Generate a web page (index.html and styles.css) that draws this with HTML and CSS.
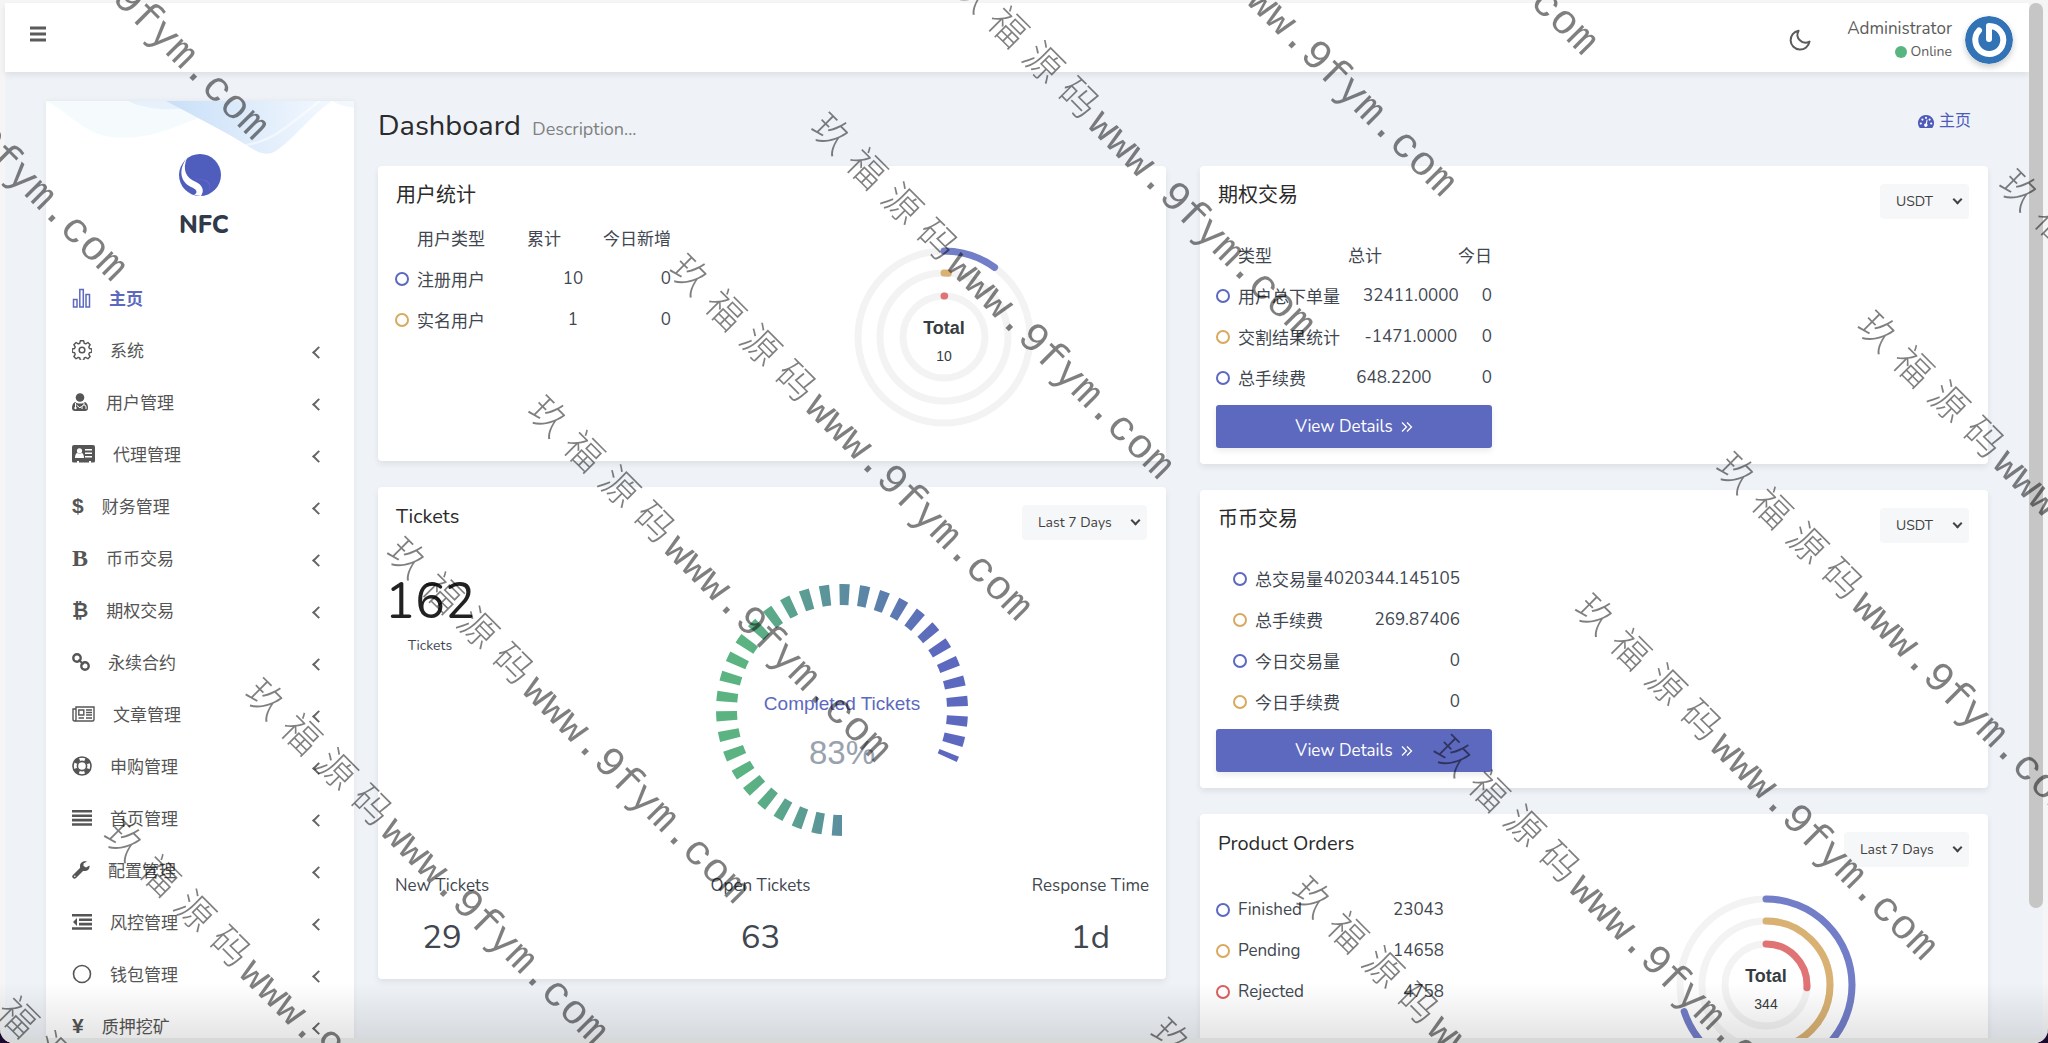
FILE: index.html
```html
<!DOCTYPE html>
<html lang="zh-CN">
<head>
    <meta charset="UTF-8">
    <meta name="viewport" content="width=device-width, initial-scale=1.0">
    <title>NFC | Dashboard</title>
    <link rel="stylesheet" href="styles.css">
</head>
<body>
    <div class="window">
        <div class="page">
            <header class="navbar">
                <button class="menu-toggle" type="button" aria-label="Toggle menu">
                    <svg width="18" height="16" viewBox="0 0 18 16"><path d="M1 2h16M1 8h16M1 14h16" stroke="#5b5b5b" stroke-width="3"/></svg>
                </button>
                <div class="navbar-right">
                    <button class="theme-toggle" type="button" aria-label="Dark mode">
                        <svg width="24" height="24" viewBox="0 0 24 24" fill="none" stroke="#5b5b5b" stroke-width="2" stroke-linejoin="round"><path d="M21.5 13.6A9.5 9.5 0 1 1 10.6 2.7 8 8 0 0 0 21.5 13.6z"/></svg>
                    </button>
                    <div class="user">
                        <span class="user-name">Administrator</span>
                        <span class="user-status"><i class="status-dot"></i>Online</span>
                    </div>
                    <svg class="avatar" width="48" height="48" viewBox="0 0 48 48">
                        <circle cx="24" cy="24" r="24" fill="#3173b5"/>
                        <path d="M24 11v12" fill="none" stroke="#fff" stroke-width="6" stroke-linecap="round"/>
                        <path d="M14 14.5A14 14 0 1 0 24 10" fill="none" stroke="#fff" stroke-width="6" stroke-linecap="round"/>
                    </svg>
                </div>
            </header>

            <div class="layout">
                <aside class="sidebar">
                    <svg class="waves" viewBox="0 0 308 75" preserveAspectRatio="none">
                        <defs>
                            <linearGradient id="waveBlue" x1="0" y1="0" x2="1" y2="0">
                                <stop offset="0" stop-color="#c9dff8"/>
                                <stop offset="1" stop-color="#f3f8fe"/>
                            </linearGradient>
                        </defs>
                        <path d="M0 0C30 22 40 50 76 50S128 34 160 20C190 8 200 0 200 0z" fill="#f5fbfc"/>
                        <path d="M82 0C100 12 125 14 150 8L180 0z" fill="#e6f1fc"/>
                        <path d="M120 0C150 22 180 42 205 64 216 74 224 74 232 66 252 46 266 18 286 0z" fill="url(#waveBlue)"/>
                        <path d="M200 60C230 54 250 24 274 0" fill="none" stroke="#fff" stroke-width="3" opacity=".5"/>
                        <path d="M286 0Q296 8 308 9V0z" fill="#f3f8fc"/>
                    </svg>
                    <a class="brand" href="#">
                        <svg width="42" height="42" viewBox="0 0 42 42">
                            <circle cx="21" cy="21" r="21" fill="#4f5dbd"/>
                            <path d="M6 22C12 29 28 21 31 31c1 4-2 8-7 10 8-3 10-12 0-15-9-1-16 0-18-4z" fill="#7a66e0"/>
                            <path d="M8 4C0 14 0 27 12 33c5 2 8 5 3 8l7 1c4-6 1-11-5-14C7 24 3 16 8 4z" fill="#fff"/>
                        </svg>
                        <span>NFC</span>
                    </a>
                    <nav class="menu">
                        <a class="active" href="#">
                            <svg width="19" height="20" viewBox="0 0 19 20" fill="none" stroke="#5c69be" stroke-width="1.5"><path d="M1.5 11.5h3.5V19H1.5zM7.8 1.5h3.5V19H7.8zM14 6.5h3.5V19H14z"/></svg>
                            <span>主页</span>
                        </a>
                        <a href="#">
                            <svg width="20" height="20" viewBox="0 0 24 24" fill="none" stroke="#555" stroke-width="1.8" stroke-linejoin="round"><path d="M10 1.5h4l.8 3.2 1.9.8 2.8-1.7 2.8 2.8-1.7 2.8.8 1.9 3 .7v4l-3 .8-.8 1.9 1.7 2.8-2.8 2.8-2.8-1.7-1.9.8-.8 3.1h-4l-.8-3.1-1.9-.8-2.8 1.7-2.8-2.8 1.7-2.8-.8-1.9-3-.8v-4l3-.7.8-1.9-1.7-2.8 2.8-2.8 2.8 1.7 1.9-.8z" transform="translate(.6 -.6) scale(.95)"/><circle cx="12" cy="12" r="3.4"/></svg>
                            <span>系统</span>
                            <i class="arrow"></i>
                        </a>
                        <a href="#">
                            <svg width="16" height="18" viewBox="0 0 16 18"><circle cx="8" cy="4.5" r="4.3" fill="#555"/><path d="M3 9C1 10 0 12 0 15c0 2 1 3 3 3h10c2 0 3-1 3-3 0-3-1-5-3-6-3 2-7 2-10 0z" fill="#555"/><path d="M3.5 10v4M12 10v2m-2 4v-2q0-2 2-2t2 2v2M4.5 12l3.5 3 1.5-2" fill="none" stroke="#fff" stroke-width="1"/><circle cx="3.5" cy="15" r="1.2" fill="#fff"/></svg>
                            <span>用户管理</span>
                            <i class="arrow"></i>
                        </a>
                        <a href="#">
                            <svg width="23" height="18" viewBox="0 0 23 18"><path d="M2 0h19q2 0 2 2v14q0 1.5-1.5 1.5H19V16h-2v1.5H7V16H5v1.5H1.5Q0 17.5 0 16V2q0-2 2-2z" fill="#555"/><circle cx="7.5" cy="5.8" r="2.6" fill="#fff"/><path d="M3 13c0-3 1-5 2.5-5q2 1.5 4 0C11 8 12 10 12 13zM13 4h7v1.5h-7zM13 7.5h7V9h-7zM13 11h7v1.5h-7z" fill="#fff"/></svg>
                            <span>代理管理</span>
                            <i class="arrow"></i>
                        </a>
                        <a href="#">
                            <b class="glyph">$</b>
                            <span>财务管理</span>
                            <i class="arrow"></i>
                        </a>
                        <a href="#">
                            <b class="glyph serif">B</b>
                            <span>币币交易</span>
                            <i class="arrow"></i>
                        </a>
                        <a href="#">
                            <b class="glyph coin">₿</b>
                            <span>期权交易</span>
                            <i class="arrow"></i>
                        </a>
                        <a href="#">
                            <svg width="18" height="18" viewBox="0 0 18 18" fill="none" stroke="#555" stroke-width="2.4"><circle cx="5" cy="5" r="3.7"/><circle cx="13" cy="13" r="3.7"/><path d="M6.5 6.5l5 5" stroke-width="2"/></svg>
                            <span>永续合约</span>
                            <i class="arrow"></i>
                        </a>
                        <a href="#">
                            <svg width="23" height="16" viewBox="0 0 23 16" fill="none" stroke="#555" stroke-width="1.4"><path d="M4 1h18v12.5q0 1.5-1.5 1.5h-18Q1 15 1 13.500V3h3zM4 3v10.5Q4 15 2.500 15M6.800 4h5v5h-5zM14 4h6M14 6.500h6M14 9h6M6.500 12H12M14 12h6"/></svg>
                            <span>文章管理</span>
                            <i class="arrow"></i>
                        </a>
                        <a href="#">
                            <svg width="20" height="20" viewBox="0 0 20 20" fill="none" stroke="#555"><circle cx="10" cy="10" r="9" stroke-width="1.6"/><circle cx="10" cy="10" r="4.6" stroke-width="1.6"/><circle cx="10" cy="10" r="7" stroke-width="4" stroke-dasharray="5.5 5.5" stroke-dashoffset="-2.75"/></svg>
                            <span>申购管理</span>
                            <i class="arrow"></i>
                        </a>
                        <a href="#">
                            <svg width="20" height="16" viewBox="0 0 20 16"><path d="M0 1.3h20M0 5.700h20M0 10.100h20M0 14.500h20" stroke="#555" stroke-width="2.6"/></svg>
                            <span>首页管理</span>
                            <i class="arrow"></i>
                        </a>
                        <a href="#">
                            <svg width="18" height="18" viewBox="0 0 18 18"><path d="M2.5 15.5l8-8" stroke="#555" stroke-width="4.4" stroke-linecap="round"/><path d="M17.5 4.5l-3.5 2-2.5-1.5V2.5L15 .5C12-.6 8 1 8 5s3 5.500 5.500 5c3-.6 4.500-3 4-5.500z" fill="#555"/><circle cx="2.8" cy="15.2" r=".8" fill="#fff"/></svg>
                            <span>配置管理</span>
                            <i class="arrow"></i>
                        </a>
                        <a href="#">
                            <svg width="20" height="16" viewBox="0 0 20 16"><path d="M0 1.3h20M7 5.700h13M7 10.100h13M0 14.500h20" stroke="#555" stroke-width="2.6"/><path d="M5 4v8L1 8z" fill="#555"/></svg>
                            <span>风控管理</span>
                            <i class="arrow"></i>
                        </a>
                        <a href="#">
                            <svg width="20" height="20" viewBox="0 0 20 20"><circle cx="10" cy="10" r="8.5" fill="none" stroke="#555" stroke-width="1.6"/></svg>
                            <span>钱包管理</span>
                            <i class="arrow"></i>
                        </a>
                        <a href="#">
                            <b class="glyph">¥</b>
                            <span>质押挖矿</span>
                            <i class="arrow"></i>
                        </a>
                    </nav>
                </aside>

                <main class="content">
                    <div class="content-header">
                        <h1>Dashboard <small>Description...</small></h1>
                        <a class="breadcrumb" href="#">
                            <svg width="16" height="13" viewBox="0 0 16 13"><path d="M8 0a8 8 0 0 0-6.8 12.2q.3.8 1 .8h11.600q.7 0 1-.8A8 8 0 0 0 8 0z" fill="#4e5bb8"/><g fill="#fff"><circle cx="2.8" cy="8.5" r="1.1"/><circle cx="4.4" cy="4.6" r="1.1"/><circle cx="8" cy="2.8" r="1.1"/><circle cx="11.6" cy="4.6" r="1.1"/><circle cx="13.2" cy="8.5" r="1.1"/><path d="M8.700 4.500l.9.300-.6 4a1.700 1.700 0 1 1-1.300-.4z"/></g></svg>
                            主页
                        </a>
                    </div>

                    <div class="columns">
                        <div class="column">
                            <section class="card user-card">
                                <div class="card-head"><h2>用户统计</h2></div>
                                <div class="card-split">
                                    <table class="stats">
                                        <thead>
                                            <tr><th>用户类型</th><th>累计</th><th>今日新增</th></tr>
                                        </thead>
                                        <tbody>
                                            <tr><td class="dot blue">注册用户</td><td>10</td><td>0</td></tr>
                                            <tr><td class="dot gold">实名用户</td><td>1</td><td>0</td></tr>
                                        </tbody>
                                    </table>
                                    <svg class="rings" width="180" height="180" viewBox="-90 -90 180 180">
                                        <g class="track"><circle r="86"/><circle r="64"/><circle r="41"/></g>
                                        <g class="arc" transform="rotate(-90)">
                                            <circle class="c-blue" r="86" pathLength="360" stroke-dasharray="36 324"/>
                                            <circle class="c-gold" r="64" pathLength="360" stroke-dasharray="4 356"/>
                                            <circle class="c-red" r="41" pathLength="360" stroke-dasharray="1 359"/>
                                        </g>
                                        <text class="rings-label" y="-3">Total</text>
                                        <text class="rings-value" y="24">10</text>
                                    </svg>
                                </div>
                            </section>

                            <section class="card">
                                <div class="card-head">
                                    <h2>Tickets</h2>
                                    <div class="select"><select aria-label="Tickets period"><option>Last 7 Days</option></select></div>
                                </div>
                                <div class="tickets">
                                    <div class="tickets-total">
                                        <strong>162</strong>
                                        <span>Tickets</span>
                                    </div>
                                    <div class="gauge">
                                        <svg width="252" height="252" viewBox="-126 -126 252 252">
                                            <defs>
                                                <linearGradient id="gaugeFill" gradientUnits="userSpaceOnUse" x1="-95" y1="0" x2="95" y2="0">
                                                    <stop offset="0" stop-color="#5bb381"/>
                                                    <stop offset="1" stop-color="#5c69be"/>
                                                </linearGradient>
                                            </defs>
                                            <path d="M0 115.5A115.5 115.5 0 1 1 105.2 47.7" fill="none" stroke="url(#gaugeFill)" stroke-width="21" stroke-dasharray="9.48 9.48"/>
                                            <text class="gauge-label">Completed Tickets</text>
                                            <text class="gauge-value" y="54">83%</text>
                                        </svg>
                                    </div>
                                </div>
                                <dl class="ticket-stats">
                                    <div><dt>New Tickets</dt><dd>29</dd></div>
                                    <div><dt>Open Tickets</dt><dd>63</dd></div>
                                    <div><dt>Response Time</dt><dd>1d</dd></div>
                                </dl>
                            </section>
                        </div>

                        <div class="column">
                            <section class="card">
                                <div class="card-head">
                                    <h2>期权交易</h2>
                                    <div class="select"><select aria-label="期权交易"><option>USDT</option></select></div>
                                </div>
                                <div class="card-body">
                                    <table class="stats">
                                        <thead>
                                            <tr><th>类型</th><th>总计</th><th>今日</th></tr>
                                        </thead>
                                        <tbody>
                                            <tr><td class="dot blue">用户总下单量</td><td>32411.0000</td><td>0</td></tr>
                                            <tr><td class="dot gold">交割结果统计</td><td>-1471.0000</td><td>0</td></tr>
                                            <tr><td class="dot blue">总手续费</td><td>648.2200</td><td>0</td></tr>
                                        </tbody>
                                    </table>
                                    <button class="details" type="button">View Details
                                        <svg width="12" height="12" viewBox="0 0 12 12" fill="none" stroke="#fff" stroke-width="1.3"><path d="M1 1.5L5.5 6 1 10.5M6 1.5L10.5 6 6 10.5"/></svg>
                                    </button>
                                </div>
                            </section>

                            <section class="card">
                                <div class="card-head">
                                    <h2>币币交易</h2>
                                    <div class="select"><select aria-label="币币交易"><option>USDT</option></select></div>
                                </div>
                                <div class="card-body">
                                    <table class="stats inset">
                                        <tbody>
                                            <tr><td class="dot blue">总交易量</td><td>4020344.145105</td></tr>
                                            <tr><td class="dot gold">总手续费</td><td>269.87406</td></tr>
                                            <tr><td class="dot blue">今日交易量</td><td>0</td></tr>
                                            <tr><td class="dot gold">今日手续费</td><td>0</td></tr>
                                        </tbody>
                                    </table>
                                    <button class="details" type="button">View Details
                                        <svg width="12" height="12" viewBox="0 0 12 12" fill="none" stroke="#fff" stroke-width="1.3"><path d="M1 1.5L5.5 6 1 10.5M6 1.5L10.5 6 6 10.5"/></svg>
                                    </button>
                                </div>
                            </section>

                            <section class="card">
                                <div class="card-head">
                                    <h2>Product Orders</h2>
                                    <div class="select"><select aria-label="Orders period"><option>Last 7 Days</option></select></div>
                                </div>
                                <div class="card-split orders">
                                    <table class="stats">
                                        <tbody>
                                            <tr><td class="dot blue">Finished</td><td>23043</td></tr>
                                            <tr><td class="dot gold">Pending</td><td>14658</td></tr>
                                            <tr><td class="dot red">Rejected</td><td>4758</td></tr>
                                        </tbody>
                                    </table>
                                    <svg class="rings" width="180" height="180" viewBox="-90 -90 180 180">
                                        <g class="track"><circle r="86"/><circle r="64"/><circle r="41"/></g>
                                        <g class="arc" transform="rotate(-90)">
                                            <circle class="c-blue" r="86" pathLength="360" stroke-dasharray="252 108"/>
                                            <circle class="c-gold" r="64" pathLength="360" stroke-dasharray="180 180"/>
                                            <circle class="c-red" r="41" pathLength="360" stroke-dasharray="94 266"/>
                                        </g>
                                        <text class="rings-label" y="-3">Total</text>
                                        <text class="rings-value" y="24">344</text>
                                    </svg>
                                </div>
                            </section>
                        </div>
                    </div>
                </main>
            </div>
        </div>
        <div class="scrollbar"><div class="scrollbar-thumb"></div></div>
    </div>
    <div class="window-shade"></div>
    <div class="watermark"><div class="watermark-grid" id="watermarkGrid"></div></div>

    <script>
        // Fill the diagonal watermark grid, leaving cells outside the window empty
        const grid = document.getElementById('watermarkGrid');
        for (let i = 0; i < 36; i++) {
            const mark = document.createElement('div');
            mark.className = 'mark';
            mark.innerHTML = '<i>玖</i><i>福</i><i>源</i><i>码</i><span>www.9fym.com</span>';
            grid.appendChild(mark);

            mark.querySelectorAll('i, span').forEach(part => {
                const box = part.getBoundingClientRect();
                if (box.right < 4 || box.bottom < 4 || box.left > innerWidth - 4 || box.top > innerHeight - 4) {
                    part.textContent = '';
                }
            });
        }
    </script>
</body>
</html>
```
FILE: styles.css
```css
:root {
    --primary: #5c69be;
    --gold: #d9a95f;
    --red: #dc5f5f;
    --green: #59b580;
    --bg: #eff3f8;
    --text: #414750;
    --menu: #555;
    --shadow: 0 3px 6px rgba(0, 0, 0, 0.08);
}

*,
*::before,
*::after {
    margin: 0;
    padding: 0;
    box-sizing: border-box;
}

body {
    height: 100vh;
    overflow: hidden;
    background: #1c0a2e;
    color: var(--text);
    font-family: Nunito, Lato, "Noto Sans CJK SC", sans-serif;
    font-size: 17px;
}

a {
    color: inherit;
    text-decoration: none;
}

button {
    border: none;
    background: none;
    font: inherit;
    cursor: pointer;
}

.window {
    display: flex;
    height: 100vh;
    padding: 3px 5px 0;
    background: #f5f5f6;
    border-radius: 0 0 14px 14px;
    overflow: hidden;
}

.page {
    flex: 1;
    background: var(--bg);
}

.scrollbar {
    width: 14px;
    background: var(--bg);
}

.scrollbar-thumb {
    height: 87%;
    background: #c6c6c6;
    border-radius: 7px;
}

/* Navbar */
.navbar {
    display: flex;
    justify-content: space-between;
    align-items: center;
    height: 69px;
    padding: 4px 16px 0 24px;
    background: #fff;
    box-shadow: var(--shadow);
}

.menu-toggle {
    line-height: 0;
    padding-bottom: 12px;
}

.navbar-right {
    display: flex;
    align-items: center;
}

.theme-toggle {
    line-height: 0;
    margin-right: 35px;
}

.user {
    display: flex;
    flex-direction: column;
    align-items: flex-end;
    margin-right: 13px;
    color: #5b5b5b;
    line-height: 24px;
}

.user-status {
    display: flex;
    align-items: center;
    gap: 4px;
    font-size: 14px;
    line-height: 22px;
}

.status-dot {
    width: 12px;
    height: 12px;
    border-radius: 50%;
    background: var(--green);
}

.avatar {
    border-radius: 50%;
    box-shadow: 0 3px 6px rgba(0, 0, 0, 0.2);
}

.layout {
    display: flex;
    gap: 24px;
    padding: 0 41px;
}

/* Sidebar */
.sidebar {
    position: relative;
    flex: 0 0 308px;
    margin-top: 29px;
    padding-top: 53px;
    background: #fff;
    box-shadow: 0 0 6px rgba(0, 0, 0, 0.06);
}

.waves {
    position: absolute;
    top: 0;
    left: 0;
    width: 100%;
    height: 55px;
}

.brand {
    position: relative;
    display: flex;
    flex-direction: column;
    align-items: center;
    gap: 14px;
    margin-bottom: 32px;
    color: #303a4a;
    font-size: 25px;
    font-weight: 800;
    line-height: 30px;
}

.brand span {
    padding-left: 8px;
}

.menu a {
    display: flex;
    align-items: center;
    gap: 18px;
    height: 52px;
    padding: 0 31px 0 26px;
    color: var(--menu);
}

.menu a.active {
    color: var(--primary);
    font-weight: 700;
}

.glyph {
    font: bold 21px/20px "Liberation Sans", sans-serif;
}

.glyph.serif {
    font: bold 24px/20px "Liberation Serif", serif;
}

.glyph.coin {
    font: bold 20px/20px "DejaVu Sans", sans-serif;
}

.arrow {
    width: 9px;
    height: 9px;
    margin: 4px 0 0 auto;
    border: solid #666;
    border-width: 0 0 2px 2px;
    transform: rotate(45deg);
}

/* Content */
.content {
    flex: 1;
    padding-top: 37px;
}

.content-header {
    display: flex;
    justify-content: space-between;
    align-items: flex-start;
    height: 57px;
    padding-right: 17px;
}

h1 {
    color: #2b2b2b;
    font-size: 29px;
    font-weight: 400;
    line-height: 34px;
}

h1 small {
    margin-left: 4px;
    color: #808080;
    font-size: 18px;
}

.breadcrumb {
    display: flex;
    align-items: center;
    gap: 5px;
    color: #4e5bb8;
    font-size: 16px;
    line-height: 24px;
}

.columns {
    display: grid;
    grid-template-columns: 1fr 1fr;
    align-items: start;
    gap: 34px;
}

.column {
    display: grid;
    gap: 26px;
}

.card {
    background: #fff;
    border-radius: 4px;
    box-shadow: var(--shadow);
}

.user-card {
    padding-bottom: 34px;
}

.card-head {
    display: flex;
    justify-content: space-between;
    align-items: flex-start;
    min-height: 53px;
    padding: 18px 19px 0 18px;
}

.user-card .card-head {
    min-height: 51px;
}

h2 {
    color: #2b2b2b;
    font-size: 20px;
    font-weight: 400;
    line-height: 24px;
}

.select {
    position: relative;
}

.select::after {
    content: "";
    position: absolute;
    top: 12px;
    right: 8px;
    width: 7px;
    height: 7px;
    border: solid #444;
    border-width: 0 2px 2px 0;
    transform: rotate(45deg);
    pointer-events: none;
}

.select select {
    appearance: none;
    height: 35px;
    padding: 0 35px 0 16px;
    border: none;
    border-radius: 4px;
    background: #f6f7f9;
    color: #414141;
    font: inherit;
    font-size: 14px;
}

.card-split {
    display: flex;
    justify-content: space-between;
    padding: 0 132px 0 17px;
}

.card-body {
    padding: 15px 16px 16px;
}

/* Stats rows spread their cells over the row */
.stats {
    display: block;
    width: 276px;
    white-space: nowrap;
}

.stats thead,
.stats tbody {
    display: block;
}

.stats tr {
    display: flex;
    justify-content: space-between;
    align-items: center;
    height: 41px;
}

.stats thead tr {
    padding-left: 22px;
}

.stats th {
    font-weight: 400;
}

.stats.inset {
    padding: 0 32px 0 17px;
}

.orders .stats {
    width: 228px;
}

.dot {
    display: flex;
    align-items: center;
    gap: 8px;
}

.dot::before {
    content: "";
    width: 14px;
    height: 14px;
    border: 2px solid var(--primary);
    border-radius: 50%;
}

.dot.gold::before {
    border-color: var(--gold);
}

.dot.red::before {
    border-color: var(--red);
}

.details {
    display: flex;
    justify-content: center;
    align-items: center;
    gap: 8px;
    width: 276px;
    height: 43px;
    margin-top: 7px;
    border-radius: 3px;
    background: var(--primary);
    box-shadow: var(--shadow);
    color: #fff;
}

/* Charts */
.rings {
    margin-top: 30px;
}

.orders {
    height: 230px;
    padding: 22px 132px 0 16px;
}

.orders .rings {
    margin-top: 6px;
}

.rings circle {
    fill: none;
    stroke-width: 7;
    stroke-linecap: round;
}

.track circle {
    stroke: #f3f3f4;
}

.arc .c-blue {
    stroke: #737ec8;
}

.arc .c-gold {
    stroke: #d9b173;
}

.arc .c-red {
    stroke: #e07373;
}

.rings text,
.gauge text {
    font-family: "Liberation Sans", sans-serif;
    text-anchor: middle;
}

.rings-label {
    fill: #373d3f;
    font-size: 18px;
    font-weight: 700;
}

.rings-value {
    fill: #373d3f;
    font-size: 14px;
}

.tickets {
    display: flex;
    padding-top: 32px;
}

.tickets-total {
    display: flex;
    flex-direction: column;
    align-items: center;
    gap: 4px;
    width: 140px;
    padding-right: 36px;
    font-size: 14px;
    line-height: 20px;
}

.tickets-total strong {
    color: #222;
    font-size: 50px;
    font-weight: 400;
    line-height: 60px;
}

.gauge {
    flex: 1;
    padding-top: 12px;
    line-height: 0;
    text-align: center;
}

.gauge-label {
    fill: var(--primary);
    font-size: 19px;
}

.gauge-value {
    fill: #99a2ad;
    font-size: 33px;
}

.ticket-stats {
    display: flex;
    justify-content: space-between;
    padding: 38px 17px 21px;
    text-align: center;
}

.ticket-stats dt {
    line-height: 24px;
}

.ticket-stats dd {
    margin-top: 20px;
    font-size: 33px;
    line-height: 40px;
}

/* Bottom edge of the window */
.window-shade {
    position: fixed;
    right: 0;
    bottom: 0;
    left: 0;
    height: 60px;
    border-bottom: 5px solid #d7d9d9;
    border-radius: 0 0 14px 14px;
    background: linear-gradient(rgba(0, 0, 0, 0), rgba(0, 0, 0, 0.1));
    pointer-events: none;
}

/* Watermark */
.watermark {
    position: fixed;
    inset: 0;
    overflow: hidden;
    pointer-events: none;
}

.watermark-grid {
    position: absolute;
    top: 0;
    left: 0;
    display: grid;
    grid-template-columns: repeat(3, 880px);
    grid-auto-rows: 200px;
    transform: rotate(45deg) translate(-223px, -1590px);
    transform-origin: 0 0;
}

.mark {
    display: flex;
    align-items: center;
    color: rgba(0, 0, 0, 0.5);
    font-family: "Liberation Mono", "Noto Sans CJK SC", monospace;
    font-size: 42px;
    line-height: 50px;
}

.mark i {
    width: 50px;
    font-size: 38px;
    font-style: normal;
    font-weight: 300;
    text-align: center;
}
```
